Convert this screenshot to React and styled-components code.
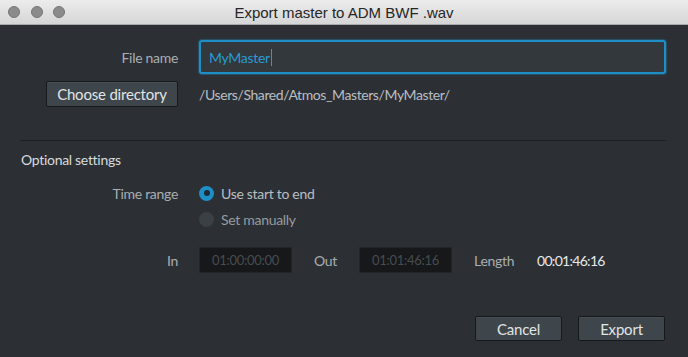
import React from "react";
import styled, { createGlobalStyle } from "styled-components";

const Global = createGlobalStyle`
  html, body { margin: 0; padding: 0; background: #2c3035; }
  * { box-sizing: border-box; }
`;

const Window = styled.div`
  width: 688px;
  height: 357px;
  display: flex;
  flex-direction: column;
  background: #2c3035;
  font-family: Lato, "Open Sans", sans-serif;
  font-size: 14px;
  letter-spacing: -0.3px;
  overflow: hidden;
`;

const TitleBar = styled.div`
  height: 25px;
  flex: none;
  display: flex;
  align-items: center;
  position: relative;
  background: linear-gradient(#ececec, #d6d6d6);
  border-bottom: 1px solid #a9a9a9;
`;

const Lights = styled.div`
  display: flex;
  gap: 10.5px;
  padding-left: 8px;
`;

const Light = styled.span`
  width: 12px;
  height: 12px;
  border-radius: 50%;
  background: #8b8b8b;
  border: 1px solid #767676;
`;

const Title = styled.div`
  position: absolute;
  left: 0;
  right: 0;
  text-align: center;
  font-family: "Liberation Sans", Arial, sans-serif;
  font-size: 15px;
  letter-spacing: 0;
  color: #262626;
  pointer-events: none;
`;

const Body = styled.div`
  flex: 1;
  display: flex;
  flex-direction: column;
  padding: 15px 22px 0 0;
`;

const FormRow = styled.div`
  display: grid;
  grid-template-columns: 178px 1fr;
  column-gap: 21px;
  align-items: center;
  height: ${(p) => p.$h}px;
  margin-top: ${(p) => p.$mt || 0}px;
`;

const Label = styled.div`
  text-align: right;
  color: #a9aeb2;
`;

const TextInput = styled.div`
  height: 34px;
  border: 2px solid #1d8fc6;
  border-radius: 3px;
  background: #33383c;
  display: flex;
  align-items: center;
  padding-left: 8px;
  color: #2a9ad3;
  box-shadow: 0 0 1px 1px rgba(29, 143, 198, 0.35);
`;

const Caret = styled.span`
  display: inline-block;
  width: 1px;
  height: 17px;
  margin-left: 1px;
  background: #2a9ad3;
`;

const Button = styled.button`
  height: ${(p) => p.$h || 25}px;
  width: ${(p) => p.$w}px;
  justify-self: end;
  background: #3e464b;
  border: 1px solid #16191c;
  border-radius: 2px;
  color: #e1e4e6;
  font-family: inherit;
  font-size: 15px;
  letter-spacing: -0.2px;
  padding: 0;
  box-shadow: inset 0 1px 0 rgba(255,255,255,0.05);
`;

const PathText = styled.div`
  color: #b9bec2;
  letter-spacing: -0.4px;
`;

const Divider = styled.div`
  height: 1px;
  background: #1c2023;
  margin: 33px 0 0 20px;
`;

const SectionTitle = styled.div`
  margin: 10px 0 0 21px;
  height: 18px;
  line-height: 18px;
  color: #d8dbde;
`;

const RadioLine = styled.div`
  display: flex;
  align-items: center;
  gap: 7px;
  color: ${(p) => (p.$disabled ? "#969ba0" : "#b9bec2")};
`;

const RadioDot = styled.span`
  width: 15px;
  height: 15px;
  border-radius: 50%;
  display: flex;
  align-items: center;
  justify-content: center;
  background: ${(p) => (p.$on ? "#1d8fc6" : "#3a4044")};
  &::after {
    content: "";
    display: ${(p) => (p.$on ? "block" : "none")};
    width: 6px;
    height: 6px;
    border-radius: 50%;
    background: #1b2a33;
  }
`;

const TimeRow = styled.div`
  display: flex;
  align-items: center;
  height: 26px;
  margin-top: 19px;
`;

const TimeLabel = styled.div`
  width: ${(p) => p.$w}px;
  text-align: ${(p) => p.$align || "left"};
  margin-right: ${(p) => p.$mr || 0}px;
  color: #a9aeb2;
`;

const TimeField = styled.div`
  width: 93px;
  height: 26px;
  background: #16181a;
  border: 1px solid #22262a;
  display: flex;
  align-items: center;
  justify-content: center;
  color: #474c51;
  font-size: 13px;
  margin-right: ${(p) => p.$mr}px;
`;

const TimeValue = styled.div`
  color: #e6e8ea;
  letter-spacing: -0.7px;
`;

const Footer = styled.div`
  display: flex;
  justify-content: flex-end;
  gap: 16px;
  margin-top: 43px;
  padding-right: 1px;
`;

export default function App() {
  return (
    <Window>
      <Global />
      <TitleBar>
        <Lights>
          <Light />
          <Light />
          <Light />
        </Lights>
        <Title>Export master to ADM BWF .wav</Title>
      </TitleBar>
      <Body>
        <FormRow $h={34} $mt={0}>
          <Label>File name</Label>
          <TextInput>
            MyMaster
            <Caret />
          </TextInput>
        </FormRow>
        <FormRow $h={26} $mt={7}>
          <Button $w={132} $h={26}>Choose directory</Button>
          <PathText>/Users/Shared/Atmos_Masters/MyMaster/</PathText>
        </FormRow>
        <Divider />
        <SectionTitle>Optional settings</SectionTitle>
        <FormRow $h={18} $mt={15}>
          <Label>Time range</Label>
          <RadioLine>
            <RadioDot $on />
            Use start to end
          </RadioLine>
        </FormRow>
        <FormRow $h={18} $mt={8}>
          <span />
          <RadioLine $disabled>
            <RadioDot />
            Set manually
          </RadioLine>
        </FormRow>
        <TimeRow>
          <TimeLabel $w={178} $align="right" $mr={21}>In</TimeLabel>
          <TimeField $mr={22}>01:00:00:00</TimeField>
          <TimeLabel $w={45}>Out</TimeLabel>
          <TimeField $mr={22}>01:01:46:16</TimeField>
          <TimeLabel $w={63}>Length</TimeLabel>
          <TimeValue>00:01:46:16</TimeValue>
        </TimeRow>
        <Footer>
          <Button $w={87} $h={25}>Cancel</Button>
          <Button $w={87} $h={25}>Export</Button>
        </Footer>
      </Body>
    </Window>
  );
}
